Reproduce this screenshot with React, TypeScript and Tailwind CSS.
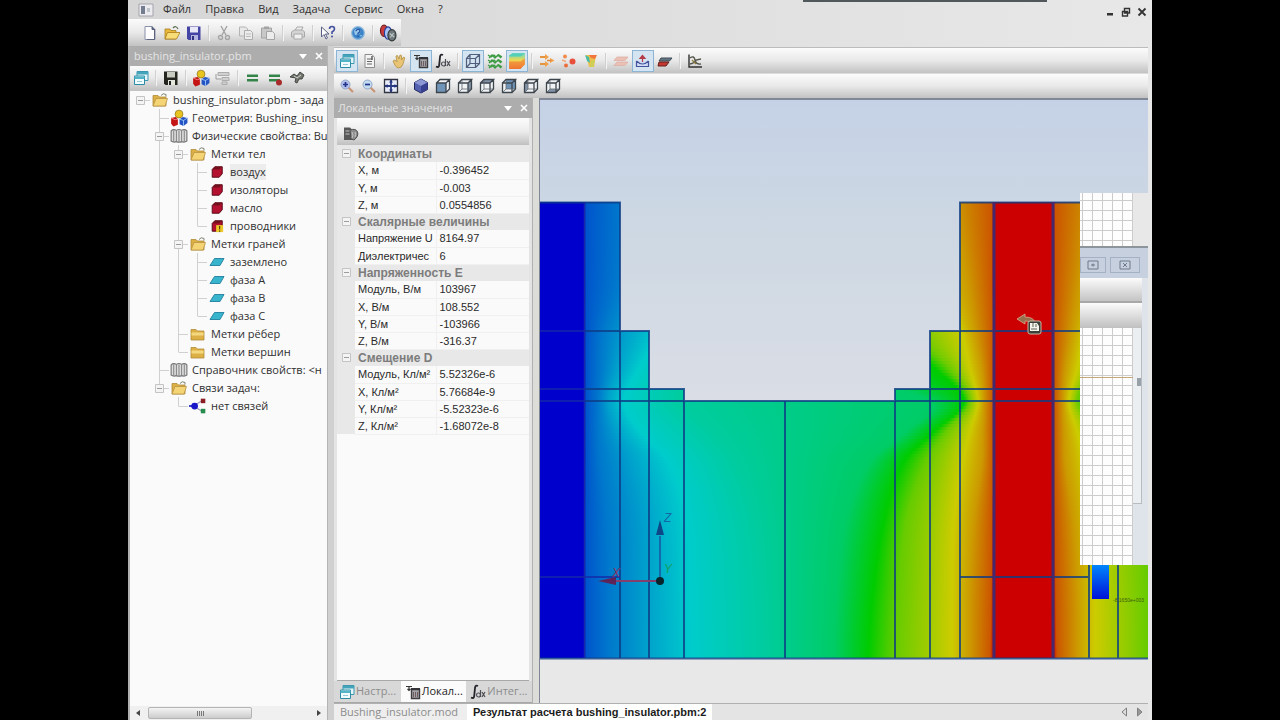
import type { ReactNode } from "react";
import clsx from "clsx";

/* ---------- icons ---------- */

function Icon({ children, className }: { children: ReactNode; className?: string }) {
  return (
    <svg viewBox="0 0 16 16" className={clsx("shrink-0", className ?? "h-4 w-4")} fill="none">
      {children}
    </svg>
  );
}

const NewIcon = () => (
  <Icon>
    <path d="M3 1.500h7l3 3v10H3z" fill="#fdfdff" stroke="#8a90a8" />
    <path d="M10 1.500v3h3" fill="#59627e" stroke="#59627e" />
    <path d="M12.500 5v9.500H5" stroke="#5c6480" />
  </Icon>
);

const OpenIcon = () => (
  <Icon>
    <path d="M1 4h5l1 1.500h5V14H1z" fill="#e8b93c" stroke="#a87c1c" strokeWidth=".8" />
    <path d="M3.500 7.500H16L12.500 14H1z" fill="#f8dc78" stroke="#a87c1c" strokeWidth=".8" />
    <path d="M9 3q3-3 5 1" stroke="#5c6c50" strokeWidth="1.200" />
  </Icon>
);

const SaveIcon = ({ dark }: { dark?: boolean }) => (
  <Icon>
    <path d="M1 1.500h13.500V15H2.500L1 13.500z" fill={dark ? "#25251f" : "#4444a4"} />
    <path d="M4 2h8v5.500H4z" fill={dark ? "#c8ccc0" : "#e8e8f8"} />
    <path d="M5 10h7v5H5z" fill={dark ? "#e4e8dc" : "#b4b4e0"} />
    <path d="M6 11h2v4H6z" fill={dark ? "#222" : "#30307c"} />
  </Icon>
);

const CutIcon = () => (
  <Icon>
    <path d="M5 1l5 9M11 1L6 10" stroke="#a4a4a4" strokeWidth="1.400" />
    <circle cx="4.500" cy="12.500" r="2" stroke="#a4a4a4" strokeWidth="1.300" />
    <circle cx="11.500" cy="12.500" r="2" stroke="#a4a4a4" strokeWidth="1.300" />
  </Icon>
);

const CopyIcon = () => (
  <Icon>
    <path d="M1.500 2h6l2 2v7h-8z" fill="#e8e8e8" stroke="#b4b4b4" />
    <path d="M6.500 5.500h6l2 2v7h-8z" fill="#ececec" stroke="#acacac" />
    <path d="M8 9h5M8 11.500h5" stroke="#bcbcbc" />
  </Icon>
);

const PasteIcon = () => (
  <Icon>
    <path d="M1.500 3h10v10h-10z" fill="#c8c8c8" stroke="#a4a4a4" />
    <path d="M4 1.500h5V4H4z" fill="#a4a4a4" />
    <path d="M6.500 6.500h6l2 2v6h-8z" fill="#ececec" stroke="#a4a4a4" />
  </Icon>
);

const PrintIcon = () => (
  <Icon>
    <path d="M5 5.500L7 2h6l-2 4" fill="#eee" stroke="#a8a8a8" />
    <path d="M1.500 7l3-2h8l2 2v5h-13z" fill="#d4d4d4" stroke="#a8a8a8" />
    <path d="M4 9h8v5H4z" fill="#f0f0f0" stroke="#a8a8a8" />
  </Icon>
);

const HelpCursorIcon = () => (
  <Icon>
    <path d="M1.500 2v10l2.500-2.500L6 14l1.500-1-2-4H9z" fill="#fff" stroke="#5a6084" />
    <path d="M9.500 4q0-2.500 2.500-2.500T14.500 4q0 1.500-2.500 3v2" stroke="#4450a0" strokeWidth="1.600" />
    <circle cx="12" cy="11.500" r="1" fill="#4450a0" />
  </Icon>
);

const AboutIcon = () => (
  <Icon>
    <circle cx="8" cy="8" r="6.300" fill="#3c84c8" stroke="#8cb8dc" strokeWidth="1.200" />
    <path d="M4 6q1-3 4-2l3 2-2 3-4 1zM10 10l2 0-1 2z" fill="#98c8ec" />
    <path d="M6 6.200q0-1.700 2-1.700t2 1.500q0 1-2 2.200v1M8 10.500v1.500" stroke="#1c4c98" strokeWidth="1.200" />
  </Icon>
);

const LayersIcon = () => (
  <Icon className="h-[18px] w-[18px]">
    <ellipse cx="4.500" cy="6" rx="3.200" ry="5" fill="#c83c3c" stroke="#701c1c" />
    <ellipse cx="8" cy="8" rx="3.200" ry="5.500" fill="#a8c4f4" stroke="#283c9c" />
    <ellipse cx="11.500" cy="10" rx="3.600" ry="5" fill="#70787c" stroke="#303838" />
    <path d="M9.500 8.500l4 3M10 12l3-4" stroke="#bcc8c8" />
  </Icon>
);

const WindowIcon = () => (
  <Icon>
    <path d="M4 1.500h11v9H4z" fill="#e4f4f8" stroke="#3c98b0" />
    <path d="M4 2h11v2.500H4z" fill="#44a4bc" />
    <path d="M1.500 6h10v8.500h-10z" fill="#f0fcff" stroke="#2c8ca4" />
    <path d="M1.500 6.500h10v2.500h-10z" fill="#54b4c8" />
    <path d="M4 11.500h5" stroke="#94c8d4" />
  </Icon>
);

const GeometryIcon = () => (
  <Icon className="h-[18px] w-[18px]">
    <circle cx="8" cy="4.500" r="3.500" fill="#e8c420" stroke="#846c10" strokeWidth=".6" />
    <path d="M1 8l4-1 2 2v5l-4 1.500L1 13z" fill="#c41414" />
    <path d="M8.500 9l3-2 4 1v4.500l-3.500 2.500-3.500-1.500z" fill="#2454c4" />
    <path d="M8.500 9l3.500 1.200L15.500 8M12 10v5" stroke="#9cc8f8" strokeWidth=".8" />
    <path d="M1 8l3.500 1.500L7 9" stroke="#f08080" strokeWidth=".8" />
  </Icon>
);

const LinkFormIcon = () => (
  <Icon>
    <path d="M3 2.500h11v3H3zM7 7.500h7v3H7zM7 12h5v2.500H7z" fill="#d0d0d0" stroke="#acacac" />
    <path d="M1 4v5h5" stroke="#9c9c9c" />
  </Icon>
);

const EqualIcon = ({ dot }: { dot?: boolean }) => (
  <Icon>
    <path d="M2 4.500h11v2.500H2zM2 9h11v2.500H2z" fill="#34844a" />
    {dot && <circle cx="12" cy="12.500" r="3" fill="#a82c2c" />}
  </Icon>
);

const RunIcon = () => (
  <Icon>
    <path d="M1 7l4-3 3 2 3-4 4 3-2 4-3 0-2 4-2-1 1-4z" fill="#74786f" stroke="#383c38" strokeWidth=".9" />
    <path d="M5 6l3 2 4-3" stroke="#d4d8d4" />
  </Icon>
);

const PageIcon = () => (
  <Icon>
    <path d="M4 1.500h7l2.500 3V14.500H4z" fill="#f4f4f4" stroke="#8c8c8c" />
    <path d="M6 6h5M6 8.500h5M6 11h5" stroke="#646464" />
    <path d="M11 3v4" stroke="#5c5c5c" strokeWidth="1.500" />
  </Icon>
);

const HandIcon = () => (
  <Icon>
    <path d="M2 8l2-1 2 2-1-6 1.500-.5L8 6l1-4 1.500.500L10.500 7l2-3 1.300.800L12 11q-1 4-5 4-3-1-5-7z" fill="#e8c474" stroke="#b89850" strokeWidth=".9" />
  </Icon>
);

const LocalIcon = () => (
  <Icon>
    <path d="M1 2.500h6M4 2.500v4M2.500 5L4 6.500 5.500 5" stroke="#363636" strokeWidth="1.200" />
    <path d="M6.500 5.500h8v9h-8z" fill="#a4a4a8" stroke="#3c3c40" strokeWidth="1.400" />
    <path d="M6 4h9v2H6z" fill="#343438" />
    <path d="M8.500 8v5M10.500 8v5M12.500 8v5" stroke="#6c5c60" />
  </Icon>
);

const IntegralIcon = () => (
  <Icon>
    <path d="M8 2q-2.500-1.500-3 2L4.200 12Q4 15 1 13.500" stroke="#24242a" strokeWidth="1.800" />
    <circle cx="8.500" cy="11" r="2" stroke="#54545c" strokeWidth="1.200" />
    <path d="M10.500 6v7M12 8l3 5M15 8l-3 5" stroke="#4c4c54" strokeWidth="1.200" />
  </Icon>
);

const WireIcon = () => (
  <Icon>
    <path
      d="M1.500 5.500h9v9h-9zM5 1.500h9.500v9H5zM1.500 5.500l3.500-4M10.500 5.500l4-4M10.500 14.500l4-4M1.500 14.500l3.500-4"
      stroke="#50607c"
      strokeWidth="1.200"
    />
  </Icon>
);

const MeshIcon = () => (
  <Icon>
    {[2, 7, 12].map((y) => (
      <path key={y} d={`M1 ${y}l3 2 3-2 2 2 3-2 3 2M2 ${y + 3}l3-3 3 3 3-3 3 3`} stroke="#3c9c44" strokeWidth="1.300" />
    ))}
  </Icon>
);

const ColorMapIcon = () => (
  <Icon className="h-[18px] w-[18px]">
    <defs>
      <linearGradient id="cm" x1="0" y1="0" x2="0" y2="1">
        <stop offset="0" stopColor="#5cd8c4" />
        <stop offset=".45" stopColor="#f0d850" />
        <stop offset="1" stopColor="#f06c30" />
      </linearGradient>
    </defs>
    <path d="M1 3l3-2h11v10l-4 4H1z" fill="url(#cm)" />
    <path d="M1 3l3-2h11l-4 3H1z" fill="#54d0b8" />
    <path d="M1 8.500h10l4-3v5l-4 4.500H1z" fill="#f07c34" fillOpacity=".6" />
  </Icon>
);

const VectorIcon = () => (
  <Icon>
    <path d="M1 4h7M1 11h7" stroke="#e4943c" strokeWidth="1.800" />
    <path d="M6 1l4 3-4 3zM6 8l4 3-4 3zM11 5l4.500 2.500L11 10z" fill="#f0a048" />
    <path d="M8 7.500h4" stroke="#e08838" strokeWidth="1.500" />
  </Icon>
);

const PointsIcon = () => (
  <Icon>
    <circle cx="11.500" cy="8.500" r="3" fill="#e8503c" />
    <circle cx="4" cy="3.500" r="2" fill="#f08c4c" />
    <circle cx="5" cy="12.500" r="2" fill="#ec6c3c" />
    <path d="M1 7l4 1.500" stroke="#f0a878" strokeWidth="1.500" />
  </Icon>
);

const SectionIcon = () => (
  <Icon>
    <path d="M3 2h10l-2 12H6z" fill="#ecc04c" />
    <path d="M2 2l4 2 1 6-3-2z" fill="#48bca4" />
    <path d="M6 2h8l-2 4-4-1z" fill="#f0783c" />
    <path d="M8 8l4-1-2 7H7z" fill="#ccd058" />
  </Icon>
);

const SlabIcon = () => (
  <Icon>
    <path d="M4 4h11l-3 3.500H1zM4 9h11l-3 3.500H1z" fill="#ecc0b4" stroke="#dcb0a4" strokeWidth=".8" />
  </Icon>
);

const AnchorIcon = () => (
  <Icon>
    <path d="M1.500 8v5.500h12V8M1.500 8q3 3 6 3t6-3" fill="#d0dcf4" stroke="#44549c" strokeWidth="1.200" />
    <path d="M7.500 9V4M5 5.500L7.500 2.500 10 5.500z" stroke="#b43c48" fill="#c84854" strokeWidth="1.200" />
  </Icon>
);

const PlaneCutIcon = () => (
  <Icon>
    <path d="M4 5h11l-2.500 3H2z" fill="#607480" stroke="#404c58" />
    <path d="M2 9h10l-3 4H1z" fill="#c43834" stroke="#642018" />
  </Icon>
);

const ChartIcon = () => (
  <Icon>
    <path d="M2 1.500V14H15" stroke="#303030" strokeWidth="1.400" />
    <path d="M3 5q4-3 5 2t6 4M3 11q5-1 6-4l5-1" stroke="#54544c" strokeWidth="1.400" />
    <path d="M5 7l4 4" stroke="#8c7c3c" strokeWidth="1.200" />
  </Icon>
);

const ZoomIcon = ({ minus }: { minus?: boolean }) => (
  <Icon>
    <path d="M9.500 9.500l4.500 4.500" stroke="#c89478" strokeWidth="2.200" />
    <circle cx="6.500" cy="6.500" r="4.500" fill={minus ? "#c4dcf0" : "#b4c0ec"} stroke="#94a8c8" />
    <path d={minus ? "M4 6.500h5" : "M4 6.500h5M6.500 4v5"} stroke="#24348c" strokeWidth="1.700" />
  </Icon>
);

const FitIcon = () => (
  <Icon>
    <path d="M1.500 1.500h13v13h-13z" fill="#e8ecf8" stroke="#303440" strokeWidth="1.300" />
    <path d="M8 2v12M2 8h12" stroke="#2c3c84" strokeWidth="1.800" />
    <path d="M6 4.500L8 2l2 2.500zM6 11.500L8 14l2-2.500zM4.500 6L2 8l2.500 2zM11.500 6L14 8l-2.500 2z" fill="#24347c" />
  </Icon>
);

const SolidCubeIcon = () => (
  <Icon>
    <path d="M8 1l6.500 3.500v7L8 15l-6.500-3.500v-7z" fill="#5460b0" stroke="#20285c" />
    <path d="M8 1l6.500 3.500L8 8 1.500 4.500z" fill="#8c98d4" />
    <path d="M8 8v7l6.500-3.500v-7z" fill="#384090" />
  </Icon>
);

type Face = "front" | "right" | "top" | "back" | "left" | "bottom";

const FACES: Record<Face, string> = {
  front: "M1.500 5h9.500v9.500h-9.500z",
  right: "M11 5l3.500-3.500v9.500L11 14.500z",
  top: "M1.500 5L5 1.500h9.500L11 5z",
  back: "M5 1.500h9.500v9.500H5z",
  left: "M1.500 5L5 1.500v9.500l-3.500 3.500z",
  bottom: "M1.500 14.500L5 11h9.500L11 14.500z",
};

const CubeIcon = ({ face }: { face: Face }) => (
  <Icon>
    <path d="M1.500 5L5 1.500h9.500v9.500L11 14.500H1.500z" fill="#f0f2f4" />
    <path d={FACES[face]} fill={face === "front" || face === "back" ? "#7094b8" : "#8494a8"} />
    <path d="M1.500 5h9.500v9.500h-9.500zM1.500 5L5 1.500h9.500L11 5M14.500 1.500v9.500L11 14.500" stroke="#3c444c" strokeWidth="1.300" />
    {face !== "front" && <path d="M5 2v9h9M5 11l-3.500 3.500" stroke="#60686e" strokeWidth=".8" />}
  </Icon>
);

const FolderIcon = ({ open }: { open?: boolean }) => (
  <Icon>
    <path d="M1 3.500h5L7.500 5H14v9H1z" fill="#dcb044" stroke="#b08c38" strokeWidth=".8" />
    {open ? (
      <>
        <path d="M4 6.500h11.500L13 14H1z" fill="#f4d474" stroke="#b89444" strokeWidth=".8" />
        <path d="M9 3.500q2-3 5-1v2" stroke="#7c8470" />
      </>
    ) : (
      <path d="M1.500 6.500h12v3h-12z" fill="#f4d880" />
    )}
  </Icon>
);

const BookIcon = () => (
  <Icon className="h-[18px] w-[18px]">
    <path
      d="M1 3.500q2-2 4.700-.500 2.300-1.500 4.600 0Q13 1.500 15 3.500v9q-2 1.500-4.700.500-2.300 1-4.600 0-2.700 1-4.700-.500z"
      fill="#dcdcdc"
      stroke="#747474"
    />
    <path d="M3.300 3v10M5.700 3v10M8 3v10M10.300 3v10M12.700 3v10" stroke="#848484" strokeWidth=".9" />
  </Icon>
);

const BodyIcon = ({ marked }: { marked?: boolean }) => (
  <Icon className="h-[14px] w-[14px]">
    <path d="M2.500 5l3-3H14v8l-3.500 4h-8z" fill="#b41030" stroke="#4c0410" />
    <path d="M2.500 5l3-3H14l-3.500 3z" fill="#74101c" />
    {marked && <path d="M7 7h8v8H7z" fill="#ecc828" />}
    {marked && <path d="M11 8v4M11 13v1.500" stroke="#5c4808" strokeWidth="1.400" />}
  </Icon>
);

const FacetIcon = () => (
  <Icon>
    <path d="M5.500 4.500H15l-4 7H1z" fill="#38b4cc" stroke="#2c88a4" />
  </Icon>
);

const NodesIcon = () => (
  <Icon className="h-[18px] w-[18px]">
    <path d="M4 8l8-5M4 8l8 5" stroke="#9494b4" />
    <path d="M0 8h6" stroke="#1c1cc4" strokeWidth="1.500" />
    <circle cx="5" cy="8" r="3" fill="#1818c8" />
    <path d="M10.500 1.500h4v4h-4z" fill="#8c1c24" />
    <path d="M10.500 10.500h4v4h-4z" fill="#248c4c" />
  </Icon>
);

const ExportIcon = () => (
  <Icon>
    <path d="M1 1.500h6l2 2V14H1z" fill="#585858" />
    <path d="M7 4q6-2 7.500 2T11 14l-3-1z" fill="#8c8c8c" stroke="#505050" />
    <path d="M9 6q2 3 0 6M12 6q1 2 0 5M2.500 5h4M2.500 8h4" stroke="#c4c4c4" />
  </Icon>
);

const MdiIcon = () => (
  <Icon>
    <path d="M1 2h14v12H1z" fill="#ececf0" stroke="#a4a4ac" />
    <path d="M3 4h4v8H3z" fill="#747c90" />
    <path d="M9 6h3v4H9z" fill="#c0c4cc" />
  </Icon>
);

/* ---------- toolbars ---------- */

type Tool = { label: string; icon: ReactNode; on?: boolean } | "sep";

function Toolbar({ name, tools, className }: { name: string; tools: Tool[]; className?: string }) {
  return (
    <div
      role="toolbar"
      aria-label={name}
      className={clsx("flex shrink-0 items-center bg-linear-to-b from-[#fbfbfb] via-[#e9e9e9] to-[#c2c2c2]", className)}
    >
      {tools.map((t, i) =>
        t === "sep" ? (
          <span key={i} className="mx-[3px] h-4 w-[2px] shrink-0 border-l border-[#d0d0d0] bg-[#f4f4f4]" />
        ) : (
          <button
            key={i}
            aria-label={t.label}
            className={clsx(
              "flex h-[22px] w-[22px] shrink-0 items-center justify-center",
              t.on && "border border-[#8cb4d4] bg-[#d4e4f0]"
            )}
          >
            {t.icon}
          </button>
        )
      )}
    </div>
  );
}

const mainTools: Tool[] = [
  { label: "Создать", icon: <NewIcon /> },
  { label: "Открыть", icon: <OpenIcon /> },
  { label: "Сохранить", icon: <SaveIcon /> },
  "sep",
  { label: "Вырезать", icon: <CutIcon /> },
  { label: "Копировать", icon: <CopyIcon /> },
  { label: "Вставить", icon: <PasteIcon /> },
  "sep",
  { label: "Печать", icon: <PrintIcon /> },
  "sep",
  { label: "Справка", icon: <HelpCursorIcon /> },
  "sep",
  { label: "О программе", icon: <AboutIcon /> },
  "sep",
  { label: "Слои", icon: <LayersIcon /> },
];

const problemTools: Tool[] = [
  { label: "Окно", icon: <WindowIcon /> },
  "sep",
  { label: "Сохранить задачу", icon: <SaveIcon dark /> },
  "sep",
  { label: "Геометрия", icon: <GeometryIcon /> },
  { label: "Связи", icon: <LinkFormIcon /> },
  "sep",
  { label: "Решить", icon: <EqualIcon /> },
  { label: "Остановить", icon: <EqualIcon dot /> },
  { label: "Результаты", icon: <RunIcon /> },
];

const viewTools: Tool[] = [
  { label: "Настройка", icon: <WindowIcon />, on: true },
  { label: "Отчёт", icon: <PageIcon /> },
  "sep",
  { label: "Сдвиг", icon: <HandIcon /> },
  { label: "Локальные значения", icon: <LocalIcon />, on: true },
  { label: "Интегралы", icon: <IntegralIcon /> },
  "sep",
  { label: "Каркас", icon: <WireIcon />, on: true },
  { label: "Сетка", icon: <MeshIcon /> },
  { label: "Цветная карта", icon: <ColorMapIcon />, on: true },
  "sep",
  { label: "Векторы", icon: <VectorIcon /> },
  { label: "Точки", icon: <PointsIcon /> },
  { label: "Сечение", icon: <SectionIcon /> },
  "sep",
  { label: "Слой", icon: <SlabIcon /> },
  { label: "Привязка", icon: <AnchorIcon />, on: true },
  { label: "Плоскость", icon: <PlaneCutIcon /> },
  "sep",
  { label: "График", icon: <ChartIcon /> },
];

const cameraTools: Tool[] = [
  { label: "Увеличить", icon: <ZoomIcon /> },
  { label: "Уменьшить", icon: <ZoomIcon minus /> },
  { label: "Показать всё", icon: <FitIcon /> },
  "sep",
  { label: "Изометрия", icon: <SolidCubeIcon /> },
  { label: "Спереди", icon: <CubeIcon face="front" /> },
  { label: "Справа", icon: <CubeIcon face="right" /> },
  { label: "Сверху", icon: <CubeIcon face="top" /> },
  { label: "Сзади", icon: <CubeIcon face="back" /> },
  { label: "Слева", icon: <CubeIcon face="left" /> },
  { label: "Снизу", icon: <CubeIcon face="bottom" /> },
];

/* ---------- shared bits ---------- */

function PanelTitle({ children }: { children: ReactNode }) {
  return (
    <div className="flex h-5 shrink-0 items-center bg-[#adadad] pl-1 font-['Open_Sans',sans-serif] text-[11px] text-[#e4e4e4]">
      <span className="flex-1 truncate">{children}</span>
      <button aria-label="Меню панели" className="flex h-4 w-4 items-center justify-center">
        <svg viewBox="0 0 8 8" className="h-2 w-2"><path d="M0 2h8L4 7z" fill="#fff" /></svg>
      </button>
      <button aria-label="Закрыть панель" className="flex h-4 w-4 items-center justify-center">
        <svg viewBox="0 0 8 8" className="h-2 w-2"><path d="M1 1l6 6M7 1L1 7" stroke="#fff" strokeWidth="1.600" /></svg>
      </button>
    </div>
  );
}

function Expander() {
  return (
    <svg viewBox="0 0 9 9" className="h-[9px] w-[9px] shrink-0">
      <path d="M.5.500h8v8h-8z" fill="#f4f4f4" stroke="#c4c4c4" />
      <path d="M2 4.500h5" stroke="#9c9c9c" />
    </svg>
  );
}

/* ---------- problem tree ---------- */

// guides: one char per indent column
// "|" through line, "t" branch, "l" last branch, "-" expander, "e" last expander, "r" root
type TreeNode = { guides: string; icon: ReactNode; text: string; selected?: boolean };

const tree: TreeNode[] = [
  { guides: "r", icon: <FolderIcon open />, text: "bushing_insulator.pbm - зада" },
  { guides: " t", icon: <GeometryIcon />, text: "Геометрия: Bushing_insu" },
  { guides: " -", icon: <BookIcon />, text: "Физические свойства: Bu" },
  { guides: " |-", icon: <FolderIcon open />, text: "Метки тел" },
  { guides: " ||t", icon: <BodyIcon />, text: "воздух", selected: true },
  { guides: " ||t", icon: <BodyIcon />, text: "изоляторы" },
  { guides: " ||t", icon: <BodyIcon />, text: "масло" },
  { guides: " ||l", icon: <BodyIcon marked />, text: "проводники" },
  { guides: " |-", icon: <FolderIcon open />, text: "Метки граней" },
  { guides: " ||t", icon: <FacetIcon />, text: "заземлено" },
  { guides: " ||t", icon: <FacetIcon />, text: "фаза A" },
  { guides: " ||t", icon: <FacetIcon />, text: "фаза B" },
  { guides: " ||l", icon: <FacetIcon />, text: "фаза C" },
  { guides: " |t", icon: <FolderIcon />, text: "Метки рёбер" },
  { guides: " |l", icon: <FolderIcon />, text: "Метки вершин" },
  { guides: " t", icon: <BookIcon />, text: "Справочник свойств: <н" },
  { guides: " e", icon: <FolderIcon open />, text: "Связи задач:" },
  { guides: "  l", icon: <NodesIcon />, text: "нет связей" },
];

// the column under an inner expander is drawn one step to the right of it
function Guide({ kind }: { kind: string }) {
  const top = "|t-el".includes(kind);
  const bottom = "|t-".includes(kind);
  const arm = kind !== "|" && kind !== " ";
  return (
    <span className="relative flex h-[18px] w-[19px] shrink-0 items-center justify-center">
      <svg viewBox="0 0 19 18" className="absolute inset-0 h-full w-full">
        {top && <path d="M9.500 0v9" stroke="#d0d0d0" />}
        {bottom && <path d="M9.500 9v9" stroke="#d0d0d0" />}
        {arm && <path d="M9.500 9.500h9.500" stroke="#d0d0d0" />}
      </svg>
      {"-er".includes(kind) && (
        <button aria-label="Свернуть" className="relative">
          <Expander />
        </button>
      )}
    </span>
  );
}

function ProblemPanel() {
  return (
    <aside className="flex w-[199px] shrink-0 flex-col border-l-2 border-[#b0b0b0] bg-[#fafafa]">
      <PanelTitle>bushing_insulator.pbm</PanelTitle>
      <Toolbar name="Задача" tools={problemTools} className="h-6" />
      <ul className="min-h-0 flex-1 overflow-hidden border-t border-[#c4c4c4] pl-px font-['Open_Sans',sans-serif] text-[11px] text-[#303030]">
        {tree.map((n) => (
          <li key={n.text} className="flex h-[18px] items-center whitespace-nowrap">
            {n.guides.split("").map((g, i) => (
              <Guide key={i} kind={g} />
            ))}
            <span className="flex w-[19px] shrink-0 justify-center">{n.icon}</span>
            <span className={clsx("ml-1 leading-4", n.selected && "bg-[#ececec]")}>{n.text}</span>
          </li>
        ))}
      </ul>
      <div className="flex h-[14px] shrink-0 items-center bg-[#f0f0f0] px-1">
        <svg viewBox="0 0 8 8" className="h-2 w-2"><path d="M6 1v6L2 4z" fill="#444" /></svg>
        <div className="ml-[6px] flex h-3 w-[104px] items-center justify-center gap-px rounded-xs border border-[#b4b4b4] bg-linear-to-b from-[#f4f4f4] to-[#cccccc]">
          <i className="h-[5px] w-px bg-[#777]" />
          <i className="h-[5px] w-px bg-[#777]" />
          <i className="h-[5px] w-px bg-[#777]" />
          <i className="h-[5px] w-px bg-[#777]" />
        </div>
        <svg viewBox="0 0 8 8" className="ml-auto h-2 w-2"><path d="M2 1v6l4-3z" fill="#444" /></svg>
      </div>
    </aside>
  );
}

/* ---------- local values ---------- */

const sections: { title: string; rows: [string, string, boolean?][] }[] = [
  { title: "Координаты", rows: [["X, м", "-0.396452"], ["Y, м", "-0.003"], ["Z, м", "0.0554856"]] },
  { title: "Скалярные величины", rows: [["Напряжение U", "8164.97"], ["Диэлектричес", "6"]] },
  {
    title: "Напряженность E",
    rows: [["Модуль, В/м", "103967"], ["X, В/м", "108.552"], ["Y, В/м", "-103966"], ["Z, В/м", "-316.37"]],
  },
  {
    title: "Смещение D",
    rows: [
      ["Модуль, Кл/м", "5.52326e-6", true],
      ["X, Кл/м", "5.76684e-9", true],
      ["Y, Кл/м", "-5.52323e-6", true],
      ["Z, Кл/м", "-1.68072e-8", true],
    ],
  },
];

const panelTabs = [
  { text: "Настр...", icon: <WindowIcon /> },
  { text: "Локал...", icon: <LocalIcon />, active: true },
  { text: "Интег...", icon: <IntegralIcon /> },
];

function LocalValues() {
  return (
    <section className="flex w-[199px] shrink-0 flex-col border-r border-[#b0b0b0] bg-[#e4e4e4]">
      <PanelTitle>Локальные значения</PanelTitle>
      <div className="mx-[3px] flex min-h-0 flex-1 flex-col border-b border-[#a8a8a8] bg-[#fafafa]">
        <div className="flex h-[27px] shrink-0 items-center bg-linear-to-b from-[#fcfcfc] via-[#ececec] to-[#c0c0c0] pt-1 pl-[6px]">
          <button aria-label="Экспорт"><ExportIcon /></button>
        </div>
        <table className="w-full table-fixed border-collapse font-['Liberation_Sans',Arial,sans-serif] text-[11px] leading-4 text-[#2a2a2a]">
          <colgroup>
            <col className="w-[18px]" />
            <col className="w-[81px]" />
            <col />
          </colgroup>
          {sections.map((s) => (
            <tbody key={s.title}>
              <tr className="h-[17px] bg-[#e8e8e8]">
                <td className="p-0 pl-[5px] align-middle">
                  <button aria-label="Свернуть" className="block"><Expander /></button>
                </td>
                <th colSpan={2} className="p-0 pl-[3px] text-left text-[12px] font-bold text-[#7c7c7c]">{s.title}</th>
              </tr>
              {s.rows.map(([label, value, squared]) => (
                <tr key={label} className="h-[17px]">
                  <td className="bg-[#e8e8e8] p-0" />
                  <td className="overflow-hidden border-b border-[#f0f0f0] p-0 pl-[3px] whitespace-nowrap">
                    {label}
                    {squared && "²"}
                  </td>
                  <td className="border-b border-l border-[#f0f0f0] p-0 pl-[3px]">{value}</td>
                </tr>
              ))}
            </tbody>
          ))}
        </table>
      </div>
      <div role="tablist" className="flex h-[22px] shrink-0 border-b border-[#a8a8a8] bg-[#d8d8d8] pl-px font-['Open_Sans',sans-serif] text-[11px]">
        {panelTabs.map((t) => (
          <button
            key={t.text}
            role="tab"
            aria-selected={!!t.active}
            className={clsx(
              "flex flex-1 items-center gap-px pl-1 whitespace-nowrap",
              t.active ? "bg-[#fbfbfb] text-[#222]" : "text-[#8c8c8c]"
            )}
          >
            {t.icon}
            {t.text}
          </button>
        ))}
      </div>
    </section>
  );
}

/* ---------- field picture ---------- */

const LEVELS = [
  "#0000cd", "#0055cc", "#0077cc", "#00a0cc", "#00cccc", "#00cca0", "#00cc66",
  "#00cc00", "#66cc00", "#99cc00", "#cccc00", "#cc9900", "#cc5500",
];

// x position of every colour level at a few heights
const KEYS: { y: number; x: number[] }[] = [
  { y: 102, x: [44, 46, 80, 120, 160, 220, 280, 340, 360, 380, 395, 415, 452] },
  { y: 180, x: [44, 46, 76, 110, 150, 210, 270, 335, 360, 380, 400, 428, 452] },
  { y: 232, x: [44, 46, 62, 86, 120, 180, 260, 350, 375, 398, 422, 436, 453] },
  { y: 268, x: [44, 46, 60, 76, 98, 150, 300, 396, 410, 420, 430, 442, 453] },
  { y: 300, x: [44, 46, 58, 68, 84, 140, 390, 424, 429, 433, 438, 444, 453] },
  { y: 330, x: [44, 46, 58, 76, 100, 170, 366, 394, 406, 418, 430, 443, 453] },
  { y: 360, x: [44, 46, 60, 90, 128, 194, 330, 364, 386, 405, 423, 442, 453] },
  { y: 420, x: [44, 46, 66, 104, 146, 214, 306, 344, 366, 392, 414, 434, 452] },
  { y: 500, x: [44, 46, 68, 106, 150, 222, 296, 332, 358, 386, 412, 430, 451] },
  { y: 558, x: [44, 46, 68, 106, 152, 224, 294, 328, 354, 384, 412, 430, 450] },
];

const WIDTH = 608;
const AXIS = 967; // twice the centre line of the hot conductor
const STEP = 3;

function slope(i: number, n: number) {
  const a = KEYS[Math.max(0, i - 1)];
  const b = KEYS[Math.min(KEYS.length - 1, i + 1)];
  return (b.x[n] - a.x[n]) / (b.y - a.y);
}

// cubic interpolation between the key heights keeps the bands smooth
function levelsAt(y: number) {
  let i = 0;
  while (i < KEYS.length - 2 && KEYS[i + 1].y <= y) i++;
  const a = KEYS[i];
  const b = KEYS[i + 1];
  const h = b.y - a.y;
  const t = Math.min(1, Math.max(0, (y - a.y) / h));
  const t2 = t * t;
  const t3 = t2 * t;
  return a.x.map(
    (v, n) =>
      (2 * t3 - 3 * t2 + 1) * v +
      (t3 - 2 * t2 + t) * h * slope(i, n) +
      (3 * t2 - 2 * t3) * b.x[n] +
      (t3 - t2) * h * slope(i + 1, n)
  );
}

const strips = Array.from({ length: 152 }, (_, i) => {
  const y = 102 + i * STEP;
  const left = levelsAt(y).map((x, n) => ({ x, c: LEVELS[n] }));
  const right = left
    .slice(8)
    .reverse()
    .map((s) => ({ x: AXIS - s.x, c: s.c }));
  return { y, stops: [...left, { x: 454, c: "#cc0000" }, { x: 513, c: "#cc0000" }, ...right] };
});

function FieldView() {
  return (
    <svg
      viewBox="0 0 608 603"
      preserveAspectRatio="xMinYMin slice"
      className="block h-full w-full"
      role="img"
      aria-label="Картина поля"
    >
      <defs>
        <linearGradient id="sky" x1="0" y1="0" x2="0" y2="1">
          <stop offset="0" stopColor="#c5d1e6" />
          <stop offset=".25" stopColor="#cfd9e3" />
          <stop offset=".5" stopColor="#dadde6" />
          <stop offset=".9" stopColor="#e8e8e8" />
          <stop offset="1" stopColor="#e8e8e8" />
        </linearGradient>
        {strips.map((s) => (
          <linearGradient key={s.y} id={`f${s.y}`} gradientUnits="userSpaceOnUse" x1="0" y1="0" x2={WIDTH} y2="0">
            {s.stops.map((p, n) => (
              <stop key={n} offset={p.x / WIDTH} stopColor={p.c} />
            ))}
          </linearGradient>
        ))}
        <clipPath id="body">
          <path d="M0 102H80V231H109V289H144V301H355V289H390V231H420V102H608V558H0z" />
        </clipPath>
        <linearGradient id="legend" x1="0" y1="0" x2="0" y2="1">
          <stop offset="0" stopColor="#0090ff" />
          <stop offset="1" stopColor="#0010d8" />
        </linearGradient>
      </defs>
      <rect width="608" height="603" fill="url(#sky)" />
      <g clipPath="url(#body)">
        {strips.map((s) => (
          <rect key={s.y} y={s.y} width={WIDTH} height={STEP + 1} fill={`url(#f${s.y})`} />
        ))}
      </g>
      <g fill="none" stroke="#0c3c84" strokeOpacity=".8" strokeWidth="2">
        <path d="M0 102.500H80V231H109V289H144V301H355V289H390V231H420V102.500H608" />
        <path d="M80 231V558M109 289V558M144 301V558M245 301V558M355 301V558M390 289V558M420 231V558" />
        <path d="M80 289H109M80 301H144M44 231H80M44 289H80M44 301H80M355 301H608M390 289H608M420 231H608" />
        <path d="M420 477H549M549 440V558M578 440V558M0 558.500H608" />
      </g>
      <path d="M454 102V558M513 102V558" stroke="#46286c" strokeWidth="3" />
      <path d="M0 231H44M0 289H44M0 301H44M0 477H80M44.500 102V558" stroke="#1428a8" strokeWidth="1.500" />

      {/* axes */}
      <path d="M120 481V436" stroke="#1468ac" strokeWidth="2" />
      <path d="M120 420l4 15h-8z" fill="#0c4888" />
      <path d="M120 481H72" stroke="#84406c" strokeWidth="2" />
      <path d="M58 481l18-4v8z" fill="#5c2458" />
      <circle cx="120" cy="481" r="4" fill="#08242c" />
      <g fontFamily="Liberation Sans" fontSize="12" fontStyle="italic">
        <text x="124" y="422" fill="#1468a8">Z</text>
        <text x="72" y="477" fill="#8c3064">X</text>
        <text x="124" y="473" fill="#14a060">Y</text>
      </g>

      <rect x="552" y="462" width="17" height="37" fill="url(#legend)" />
      <text x="573" y="502" fontFamily="Liberation Sans" fontSize="5" fill="#3c5c10">-8.1650e+003</text>

      {/* pick cursor */}
      <path d="M477 219l8-5v3q10 0 10 7h-5q0-3-5-3v3z" fill="#94704c" stroke="#e0a890" strokeWidth=".8" />
      <rect x="488" y="221" width="13" height="13" rx="2" fill="#3c4038" stroke="#c8b8a4" />
      <path d="M490 223h7l2 3v5h-9z" fill="#f4f4ec" />
      <path d="M493 223v4M496 224v3M491 229h6" stroke="#5c6054" />
    </svg>
  );
}

function Grid({ className }: { className?: string }) {
  return (
    <svg className={clsx("h-full shrink-0", className)}>
      <defs>
        <pattern id="cells" width="10" height="10" patternUnits="userSpaceOnUse">
          <path d="M2.500 0v10M0 7.500h10" stroke="#cccccc" />
        </pattern>
      </defs>
      <rect width="100%" height="100%" fill="#fdfdfd" />
      <rect width="100%" height="100%" fill="url(#cells)" />
    </svg>
  );
}

/* the other document window that shows over the right edge of the view */
function GhostWindow() {
  return (
    <div className="absolute top-[93px] right-0 flex h-[372px] w-[68px] flex-col bg-[#dfe4ea]">
      <div className="flex h-[55px] shrink-0 border-b-2 border-[#8c949c] bg-[#e8e8e8]">
        <Grid className="w-[53px]" />
      </div>
      <div className="flex h-[30px] shrink-0 items-center gap-1 bg-[#c6d0de] pt-1">
        <button aria-label="Развернуть" className="flex h-4 w-[26px] items-center justify-center border border-[#a4b0c4]">
          <svg viewBox="0 0 12 10" className="h-[10px] w-3"><path d="M1 1h10v8H1zM4 5h4M6 3.500v3" fill="none" stroke="#6c788c" /></svg>
        </button>
        <button aria-label="Закрыть" className="flex h-4 w-[30px] items-center justify-center border border-[#a4b0c4]">
          <svg viewBox="0 0 12 10" className="h-[10px] w-3"><path d="M1 1h10v8H1zM4 3l4 4M8 3L4 7" fill="none" stroke="#6c788c" /></svg>
        </button>
      </div>
      <div className="mr-[6px] h-[25px] shrink-0 border-b-2 border-[#a8a8a8] bg-linear-to-b from-[#fcfcfc] to-[#c4c4c4]" />
      <div className="mr-[6px] h-[25px] shrink-0 bg-linear-to-b from-[#fcfcfc] to-[#c0c0c0]" />
      <div className="relative flex min-h-0 flex-1">
        <Grid className="w-[53px]" />
        <div className="mb-[61px] flex w-[9px] items-center border-r border-b border-[#b8bcc0] bg-[#eceff2]" />
        <div className="absolute top-[49px] left-0 h-px w-[53px] bg-[#c4a878]" />
        <div className="absolute top-[50px] right-[7px] h-2 w-1 bg-[#98a0a8]" />
      </div>
    </div>
  );
}

/* ---------- window ---------- */

const menu = ["Файл", "Правка", "Вид", "Задача", "Сервис", "Окна", "?"];

export default function App() {
  return (
    <div className="flex h-screen overflow-hidden bg-black px-32">
      <div className="relative flex min-w-0 flex-1 flex-col bg-linear-to-r from-[#d6d6d6] to-[#e8e8e8]">
        <div className="absolute top-0 right-[105px] h-[2px] w-[244px] bg-[#50585c]" />
        <header className="flex h-[19px] shrink-0 items-center pl-[10px] font-['Open_Sans',sans-serif] text-[11px] text-[#303030]">
          <MdiIcon />
          <nav className="ml-[9px] flex gap-[14px]">
            {menu.map((m) => (
              <button key={m}>{m}</button>
            ))}
          </nav>
          <div className="mt-1 mr-[5px] ml-auto flex items-center gap-[6px]">
            <button aria-label="Свернуть окно">
              <svg viewBox="0 0 10 10" className="block h-[10px] w-[10px]"><path d="M2 6h6v2.500H2z" fill="#333" /></svg>
            </button>
            <button aria-label="Восстановить окно">
              <svg viewBox="0 0 10 10" className="block h-[10px] w-[10px]"><path d="M3.500 1.500h5v4.500h-5zM1.500 4.500h5V9h-5z" fill="#eee" stroke="#333" strokeWidth="1.400" /></svg>
            </button>
            <button aria-label="Закрыть окно">
              <svg viewBox="0 0 10 10" className="block h-[10px] w-[10px]"><path d="M1.500 1.500l7 7M8.500 1.500l-7 7" stroke="#333" strokeWidth="1.800" /></svg>
            </button>
          </div>
        </header>
        <Toolbar name="Главная" tools={mainTools} className="h-[27px] self-start pr-[2px] pl-[11px]" />

        <div className="flex min-h-0 flex-1">
          <ProblemPanel />
          <div className="w-[7px] shrink-0 border-l border-[#b4b4b4] bg-[#d0d0d0]" />
          <div className="flex min-w-0 flex-1 flex-col pr-1">
            <div className="mt-px border-t border-[#bcbcbc]" />
            <Toolbar name="Вид" tools={viewTools} className="h-[25px] pl-[2px]" />
            <Toolbar name="Камера" tools={cameraTools} className="h-[25px] border-t border-[#dcdcdc] pl-[2px]" />
            <div className="flex min-h-0 flex-1">
              <LocalValues />
              <div className="w-[6px] shrink-0 bg-[#dcdcd8]" />
              <main className="relative min-w-0 flex-1 overflow-hidden border-t-2 border-l border-[#808898]">
                <FieldView />
                <GhostWindow />
              </main>
            </div>
            <div className="flex h-[17px] shrink-0 items-end border-t border-[#b0b0b0] bg-[#e4e4e4] font-['Open_Sans',sans-serif] text-[11px] leading-4">
              <button className="h-4 w-[133px] truncate bg-[#eeeeee] pl-[6px] text-left text-[#8c8c8c]">Bushing_insulator.mod</button>
              <button className="h-4 bg-white px-[6px] font-['Liberation_Sans',Arial,sans-serif] font-bold text-[#1c1c1c]">
                Результат расчета bushing_insulator.pbm:2
              </button>
              <div className="ml-auto flex h-4 items-center gap-2 pr-1">
                <button aria-label="Влево">
                  <svg viewBox="0 0 8 10" className="block h-[10px] w-2"><path d="M6.500 1v8L2 5z" fill="#ddd" stroke="#808080" /></svg>
                </button>
                <button aria-label="Вправо">
                  <svg viewBox="0 0 8 10" className="block h-[10px] w-2"><path d="M1.500 1v8L6 5z" fill="#999" stroke="#808080" /></svg>
                </button>
              </div>
            </div>
          </div>
        </div>
      </div>
    </div>
  );
}
